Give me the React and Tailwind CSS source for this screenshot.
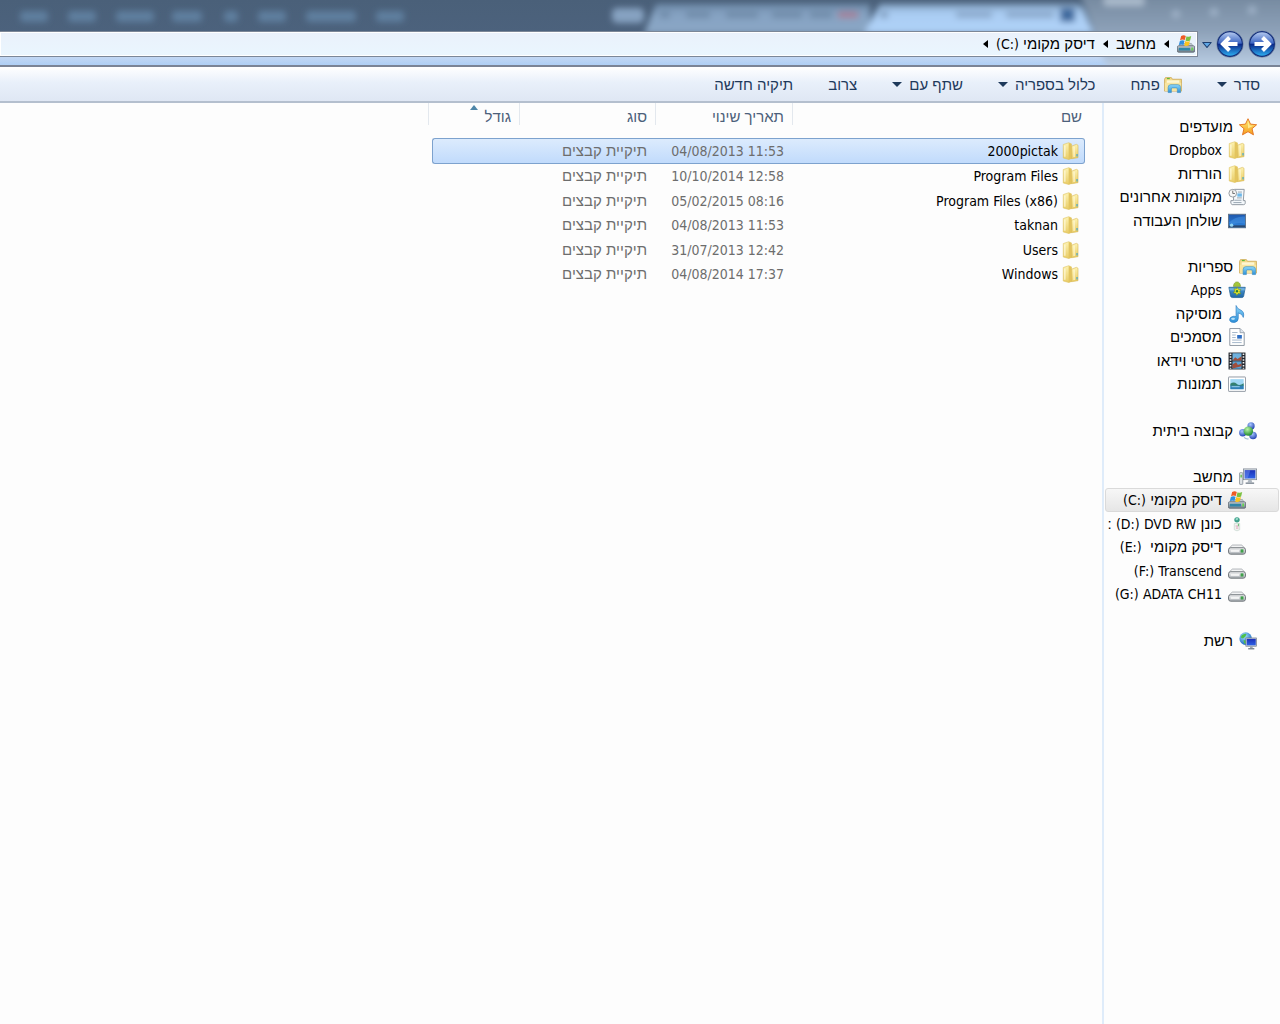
const LATIN = "font-['DejaVu_Sans_Condensed','Noto_Sans',sans-serif] text-[14px]";

const ICONS = {
  star: (
    <>
      <path d="M10 .8l2.8 6 6.8.7-5.1 4.4 1.6 6.8L10 15.2l-6.1 3.5 1.6-6.8L.4 7.5l6.8-.7z" fill="url(#star)" stroke="#e2711d" strokeWidth="1" strokeLinejoin="round" />
      <path d="M10 4l1.8 4.2 4 .4-5.8 3z" fill="#fff3a0" opacity=".8" />
    </>
  ),
  folder: (
    <>
      <path d="M1.4 2.8L7.4.8l3 1.2v16.4l-3 1-6-1.6z" fill="url(#folder)" stroke="#dcbf5c" strokeWidth=".6" />
      <path d="M7.4.8l3.2 1.8v15.8l-3.2 1z" fill="#e3c45e" />
      <path d="M10.6 4.6L16 2.6l1.8 1v13.8l-7.2 1.2z" fill="url(#folder)" stroke="#d6b54e" strokeWidth=".6" />
      <path d="M3.2 4v12.4M13.4 5v11.6" stroke="#fffbe0" strokeWidth="1.2" />
      <path d="M16 13.4h1.4v2.6H16z" fill="#4aa7c9" />
    </>
  ),
  recent: (
    <>
      <path d="M7 1.5h11l-1 12.5h2q.8 4.5-1.6 4.5H4.6Q2.4 18 3.2 14H6z" fill="#f4f8fb" stroke="#878f98" />
      <path d="M11 4.5h4.5M10 11h5.4M7 13.6h8M6 16.2h9" stroke="#9aa6b2" strokeWidth="1.1" />
      <rect x="10.4" y="6" width="5" height="3.6" fill="#6fb8e8" />
      <circle cx="5.3" cy="5.8" r="4.3" fill="#f6f6f6" stroke="#8d949b" />
      <path d="M5.3 3v3.1h2.4" fill="none" stroke="#555" strokeWidth=".9" />
    </>
  ),
  desktop: (
    <>
      <rect x=".5" y="2.5" width="19" height="15" fill="url(#screen)" stroke="#5e7186" />
      <path d="M1 12Q9 4 19 5v8q-9-2-14 1z" fill="#4b9bea" opacity=".45" />
      <path d="M1 14.8h18v2.2H1z" fill="#2a4a72" />
      <circle cx="4" cy="14.6" r="1.9" fill="#8fd3f4" />
    </>
  ),
  library: (
    <>
      <path d="M.6 3.6l1-1.8h6.6l1.2 1.8h10v13.2H.6z" fill="#f2d98a" stroke="#c9a14a" strokeWidth=".8" />
      <path d="M3 4.8h14v3H3z" fill="#fdf6d4" />
      <path d="M3.2 2.8h3.2" stroke="#5fba3c" strokeWidth="1.3" />
      <path d="M1 7.5h18v9.2H1z" fill="#f8e5a1" />
      <path d="M4.6 18.4v-5.6q0-3.2 3-3.2h7.8q3 0 3 3.2v5.6h-3.6v-3.9q0-1.3-1.2-1.3h-4.2q-1.2 0-1.2 1.3v3.9z" fill="url(#cyan)" stroke="#3d8fc0" strokeWidth=".7" />
    </>
  ),
  apps: (
    <>
      <path d="M6 6Q6.600 1 10 1t4 5z" fill="#a4c639" stroke="#6e9021" strokeWidth=".6" />
      <path d="M1 7h18.200l-1.800 9.800q-.3 1.600-2 1.600H5q-1.800 0-2.200-1.600z" fill="url(#bag)" stroke="#1f5d91" strokeWidth=".8" />
      <path d="M1.600 8h17v2.400h-17z" fill="#7ab8e6" opacity=".8" />
      <path d="M10 7l1.600 2.200 2.700.2-1.300 2.300 1.100 2.600-2.700-.5-1.600 2.200-1.300-2.500-2.600-.4 1.700-2-1-2.500 2.600.3z" fill="#e6e62c" stroke="#5c8a1c" strokeWidth=".6" />
      <circle cx="10" cy="11.400" r="1.300" fill="#2a7b34" />
    </>
  ),
  music: (
    <>
      <path d="M9 .6q1 3.8 5.4 5.200 4.200 2 2.600 8-.9-4.200-5.600-5v6q0 4-4.200 4.600-4.800.4-5.400-2.600-.2-3.600 4-4.200 1.800-.2 3.200.4z" fill="url(#cyan)" stroke="#2c7fc4" strokeWidth=".8" />
      <ellipse cx="5.600" cy="15.400" rx="2.200" ry="1.200" fill="#d3f0ff" opacity=".8" />
    </>
  ),
  doc: (
    <>
      <path d="M2 .6h11.400l4.600 4.600v14.200H2z" fill="#fff" stroke="#86909c" />
      <path d="M13.400.6v4.600H18" fill="#dde5ee" stroke="#86909c" strokeWidth=".8" />
      <path d="M4.600 5h6M4.600 7.800h4M4.600 10.600h4M4.600 13.400h10.600M4.600 16.200h10.600" stroke="#9db1c6" strokeWidth="1" />
      <rect x="10.200" y="7.800" width="5.200" height="4" fill="#2f6fc4" />
    </>
  ),
  video: (
    <>
      <rect x=".6" y=".6" width="18.800" height="18.800" fill="#23272e" />
      <rect x="5" y="1.400" width="10" height="8" fill="#6fb1dd" />
      <rect x="5" y="10.400" width="10" height="8.200" fill="#5aa2d3" />
      <path d="M5 9.400l3-3.600 2.600 2L15 4.600v4.800zM5 18.200V14l4-2.600 2 3 4-1.600v3z" fill="#a04e3c" />
      <path d="M2.800 1.600v17M17.200 1.600v17" stroke="#f4f4f4" strokeWidth="1.800" strokeDasharray="1.7 1.5" />
    </>
  ),
  pictures: (
    <>
      <rect x=".5" y="2.200" width="19" height="16" rx=".6" fill="#fff" stroke="#8a929c" />
      <rect x="2.600" y="4.600" width="14.800" height="11.200" fill="#9fd7f5" />
      <path d="M2.600 9.600q4-2.800 7 .2t7.800-.6v3H2.600z" fill="#33806f" />
      <path d="M2.600 11.800h14.800v4H2.600z" fill="#2f80b8" />
      <path d="M4 13h9" stroke="#a5d8ee" />
    </>
  ),
  homegroup: (
    <>
      <circle cx="13.400" cy="4.400" r="4" fill="url(#blueBall)" />
      <circle cx="4.200" cy="12" r="4.100" fill="url(#blueBall)" />
      <circle cx="15.600" cy="15" r="4.200" fill="url(#blueBall)" />
      <circle cx="10.400" cy="10.200" r="5.200" fill="url(#greenBall)" />
      <path d="M5.600 17q2.500 2.400 5 1.600" stroke="#9db9d3" strokeWidth="1.200" fill="none" />
    </>
  ),
  computer: (
    <>
      <rect x="5" y="1" width="14.600" height="12" fill="#d7dde4" stroke="#79838e" strokeWidth=".8" />
      <rect x="6.400" y="2.400" width="11.800" height="9.200" fill="url(#deepScreen)" />
      <path d="M6.400 2.400h6.200l-3 9.200H6.400z" fill="#6f8df0" opacity=".5" />
      <path d="M10.600 13h3.200l1 3H9.400z" fill="#aeb7c0" />
      <path d="M7.400 16h9.400v1.800H7.400z" fill="#8c959f" />
      <rect x=".6" y="5.200" width="3.600" height="13" rx=".6" fill="#dfe4e8" stroke="#7b858f" strokeWidth=".8" />
      <path d="M1.600 7.400h1.600v3.200H1.600z" fill="#5fbf4a" />
    </>
  ),
  winDrive: (
    <>
      <path d="M2.200 12.200L4 9.400h12l1.800 2.800z" fill="#c3cbd2" stroke="#7d8790" strokeWidth=".6" />
      <rect x=".5" y="12" width="19" height="7.200" rx="1.200" fill="url(#darkDrive)" stroke="#55606b" strokeWidth=".8" />
      <path d="M2 14.200h12.400v3H2z" fill="#2f86a8" />
      <path d="M16 14h1.800v3.200H16z" fill="#62d84c" />
      <path d="M4.600 1.200q2.600-1.600 5.200-.2L8.600 5.600Q6 4.200 3.400 5.800z" fill="#ee5a24" />
      <path d="M10.600 1.400q2.600 1.200 5.200-.2l-1.200 4.800Q12 7.400 9.400 6z" fill="#7cc142" />
      <path d="M3.200 6.600q2.600-1.400 5.200-.2l-1.200 4.600q-2.600-1.200-5.200.2z" fill="#2f8fe0" />
      <path d="M9.200 6.800q2.600 1.200 5.200-.2l-1.200 4.800q-2.600 1.400-5.200.2z" fill="#fbc31d" />
    </>
  ),
  dvd: (
    <>
      <circle cx="10" cy="5.400" r="3" fill="#3f9f8a" />
      <path d="M8 4.400q2-2 3.600-.6L10 6z" fill="#9fe0cf" />
      <path d="M7 9.400h6v7q-3 2.400-6 0z" fill="#eef4f0" stroke="#c2d2ca" strokeWidth=".7" />
      <path d="M8.400 12.200l3 .2M9 14.600l2.600-.2" stroke="#e3a6bf" strokeWidth="1.200" />
      <path d="M11.600 9.600v3" stroke="#74c27c" strokeWidth="1.200" />
    </>
  ),
  drive: (
    <>
      <path d="M1.200 11.800L4 8.400q.5-.6 1.400-.6h9.200q.9 0 1.400.6l2.800 3.400z" fill="#f2f3f4" stroke="#979ca1" strokeWidth=".8" />
      <rect x=".6" y="10.800" width="18.800" height="7.200" rx="2.400" fill="url(#drive)" stroke="#666c72" strokeWidth="1" />
      <path d="M3 14.400h9.400" stroke="#fafafa" strokeWidth="1.800" />
      <rect x="14" y="12.600" width="3.200" height="3.600" fill="#3fa04a" />
    </>
  ),
  network: (
    <>
      <circle cx="7.400" cy="7.400" r="7" fill="url(#globe)" />
      <path d="M3 3.600q3-2.400 5.400-1.400L7 5.400 4.400 7.200 2 6zM5 9l3.600.6-.6 3.800-2.200-.6z" fill="#4cc04a" />
      <rect x="7.600" y="6.600" width="12" height="9.200" fill="#cbd3db" stroke="#6c7782" strokeWidth=".7" />
      <rect x="8.600" y="7.600" width="10" height="7.200" fill="url(#deepScreen)" />
      <path d="M12.200 15.800h3v2h-3z" fill="#9ea8b1" />
      <path d="M10.200 17.800H17v1.600h-6.800z" fill="#7e8993" />
    </>
  ),
};

const GROUPS = [
  {
    icon: "star", label: "מועדפים",
    items: [
      { icon: "folder", latin: "Dropbox" },
      { icon: "folder", label: "הורדות" },
      { icon: "recent", label: "מקומות אחרונים" },
      { icon: "desktop", label: "שולחן העבודה" },
    ],
  },
  {
    icon: "library", label: "ספריות",
    items: [
      { icon: "apps", latin: "Apps" },
      { icon: "music", label: "מוסיקה" },
      { icon: "doc", label: "מסמכים" },
      { icon: "video", label: "סרטי וידאו" },
      { icon: "pictures", label: "תמונות" },
    ],
  },
  { icon: "homegroup", label: "קבוצה ביתית", items: [] },
  {
    icon: "computer", label: "מחשב",
    items: [
      { icon: "winDrive", label: "דיסק מקומי", drive: "(C:)", active: true },
      { icon: "dvd", label: "כונן", latin: "DVD RW", drive: "(D:)", tail: ":" },
      { icon: "drive", label: "דיסק מקומי ", drive: "(E:)" },
      { icon: "drive", latin: "Transcend", drive: "(F:)" },
      { icon: "drive", latin: "ADATA CH11", drive: "(G:)" },
    ],
  },
  { icon: "network", label: "רשת", items: [] },
];

const FILES = [
  { name: "2000pictak", date: "04/08/2013 11:53", selected: true },
  { name: "Program Files", date: "10/10/2014 12:58" },
  { name: "Program Files (x86)", date: "05/02/2015 08:16" },
  { name: "taknan", date: "04/08/2013 11:53" },
  { name: "Users", date: "31/07/2013 12:42" },
  { name: "Windows", date: "04/08/2014 17:37" },
];

function Gradients() {
  const list = [
    ["star", "#fff07a", "#f59a1b"],
    ["folder", "#fdf2b0", "#e9cc66"],
    ["screen", "#1d57ad", "#2f86dd"],
    ["cyan", "#8fd8fb", "#2c8fd8"],
    ["bag", "#4f9ad4", "#1f66a6"],
    ["deepScreen", "#1a2fb8", "#2f62e6"],
    ["drive", "#f3f4f5", "#a9aeb3"],
    ["darkDrive", "#c9d0d6", "#717c86"],
  ];
  const balls = [
    ["blueBall", "#a9c8ff", "#2546b4"],
    ["greenBall", "#b8f5a8", "#1f8a2c"],
    ["globe", "#a6e3ff", "#1a66c0"],
  ];
  return (
    <svg className="absolute size-0" aria-hidden="true">
      <defs>
        {list.map(([id, from, to]) => (
          <linearGradient key={id} id={id} x1="0" y1="0" x2="0" y2="1">
            <stop offset="0" stopColor={from} />
            <stop offset="1" stopColor={to} />
          </linearGradient>
        ))}
        {balls.map(([id, from, to]) => (
          <radialGradient key={id} id={id} cx=".4" cy=".3" r=".7">
            <stop offset="0" stopColor={from} />
            <stop offset="1" stopColor={to} />
          </radialGradient>
        ))}
        <linearGradient id="navBall" x1="0" y1="0" x2="0" y2="1">
          <stop offset="0" stopColor="#b9cdf0" />
          <stop offset=".46" stopColor="#3f68c4" />
          <stop offset=".52" stopColor="#0b2a8c" />
          <stop offset="1" stopColor="#2fb4f5" />
        </linearGradient>
      </defs>
    </svg>
  );
}

function Icon({ name }) {
  return (
    <svg viewBox="0 0 20 20" className="size-[18px] shrink-0" aria-hidden="true">
      {ICONS[name]}
    </svg>
  );
}

function Caret() {
  return <span className="border-x-[5px] border-t-[5px] border-x-transparent border-t-[#1e395b]" />;
}

function CrumbArrow() {
  return <span className="border-y-[4px] border-r-[5px] border-y-transparent border-r-black" />;
}

function NavButton({ label, back }) {
  return (
    <button aria-label={label} className="size-[28px] shrink-0">
      <svg viewBox="0 0 28 28" className="size-[28px]">
        <circle cx="14" cy="14" r="13.4" fill="#d9e6f5" stroke="#6b7f9c" strokeWidth=".8" />
        <circle cx="14" cy="14" r="12.4" fill="url(#navBall)" stroke="#14307a" strokeWidth="1.2" />
        <path
          d={back ? "M13.5 7.500L7 14l6.500 6.500M8.500 14h13" : "M14.500 7.500L21 14l-6.500 6.500M19.500 14h-13"}
          fill="none" stroke="#fff" strokeWidth="4"
        />
      </svg>
    </button>
  );
}

// browser window seen through the glass frame
function Glass() {
  const words = [[20, 28], [68, 28], [116, 38], [172, 30], [224, 14], [258, 28], [306, 50], [376, 28]];
  const tabWords = [[660, 10], [686, 24], [726, 32], [772, 30], [810, 22]];
  return (
    <svg className="absolute top-0 right-0 h-[67px] w-[1280px]" viewBox="0 0 1280 67" aria-hidden="true">
      <defs>
        <filter id="soft" x="-10%" y="-50%" width="120%" height="200%">
          <feGaussianBlur stdDeviation="3" />
        </filter>
        <linearGradient id="tab" x1="0" y1="0" x2="0" y2="1">
          <stop offset="0" stopColor="#6c88a6" />
          <stop offset=".35" stopColor="#86a3c3" />
          <stop offset="1" stopColor="#8ba7c5" />
        </linearGradient>
        <linearGradient id="tabOn" x1="0" y1="0" x2="0" y2="1">
          <stop offset="0" stopColor="#7f9dbd" />
          <stop offset=".3" stopColor="#aacdf3" />
          <stop offset="1" stopColor="#b0d2f8" />
        </linearGradient>
        <linearGradient id="frameEnd" x1="0" y1="0" x2="0" y2="1">
          <stop offset="0" stopColor="#74889e" />
          <stop offset=".45" stopColor="#8da1b8" />
          <stop offset="1" stopColor="#c6d9f0" />
        </linearGradient>
      </defs>
      <g filter="url(#soft)">
        <path d="M1080-6H1290V76H1110z" fill="url(#frameEnd)" />
        <path d="M1104-4h40v10h-40z" fill="#a9b9ca" />
        <circle cx="1176" cy="14" r="4" fill="#9fb2c8" />
        <circle cx="1214" cy="12" r="4" fill="#9fb2c8" />
        <circle cx="1252" cy="10" r="4" fill="#9fb2c8" />
        <path d="M644 34L656 4h214v30z" fill="url(#tab)" />
        <path d="M864 34L880 4h196q6 0 8 8l10 22z" fill="url(#tabOn)" />
        <rect x="612" y="8" width="32" height="15" rx="5" fill="#86a2c1" />
        {words.map(([x, w]) => <rect key={x} x={x} y="11" width={w} height="11" rx="4" fill="#5f7f9f" />)}
        {tabWords.map(([x, w]) => <rect key={x} x={x} y="12" width={w} height="6" fill="#708ba9" />)}
        <rect x="838" y="12" width="20" height="6" fill="#a67f96" />
        <rect x="880" y="12" width="8" height="6" fill="#7f9cbd" />
        <rect x="956" y="12" width="36" height="6" fill="#8aa8cb" />
        <rect x="1006" y="12" width="48" height="6" fill="#8aa8cb" />
        <rect x="1060" y="8" width="15" height="14" rx="2" fill="#3f6a9f" />
      </g>
    </svg>
  );
}

function AddressBar() {
  return (
    <header className="relative bg-linear-to-b from-[#4a6079] via-[#4c627d] to-[#8397b0] pt-[30px]">
      <div className="absolute inset-x-0 bottom-0 h-[11px] bg-linear-to-b from-[#c5d8f3] to-[#a9cdf6]" />
      <Glass />
      <div className="relative flex h-[37px] items-start border-b-2 border-b-[#7a8496] pr-[4px]">
        <div className="flex gap-[4px]">
          <NavButton label="קדימה" />
          <NavButton label="אחורה" back />
        </div>
        <button aria-label="מיקומים אחרונים" className="mx-[4px] flex h-[30px] w-[10px] items-center justify-center">
          <svg viewBox="0 0 12 8" className="h-[8px] w-[10px]">
            <path d="M1 1h10L6 7z" fill="#5fa8e6" stroke="#1d3f70" strokeWidth="1.4" strokeLinejoin="round" />
          </svg>
        </button>
        <nav className="mt-px flex h-[26px] flex-1 items-center gap-[8px] border border-l-0 border-[#7c8797] bg-linear-to-b from-[#eaf1fb] to-[#eaf6fe] pr-[2px] text-[15px] shadow-[inset_0_0_0_1px_#fff]">
          <Icon name="winDrive" />
          <CrumbArrow />
          <button>מחשב</button>
          <CrumbArrow />
          <button>דיסק מקומי <bdi dir="ltr" className={LATIN}>(C:)</bdi></button>
          <CrumbArrow />
        </nav>
      </div>
    </header>
  );
}

function Toolbar() {
  return (
    <div className="flex h-[36px] items-center gap-[35px] border-b-2 border-b-[#b4bfce] bg-linear-to-b from-white via-[#e9f0fa] via-45% to-[#dfe7f4] pt-px pr-[20px] text-[15px] text-[#1e395b]">
      <button className="flex items-center gap-[7px]">סדר <Caret /></button>
      <button className="flex items-center gap-[4px]"><Icon name="library" /> פתח</button>
      <button className="flex items-center gap-[7px]">כלול בספריה <Caret /></button>
      <button className="flex items-center gap-[7px]">שתף עם <Caret /></button>
      <button>צרוב</button>
      <button>תיקיה חדשה</button>
    </div>
  );
}

function TreeLink({ item, head }) {
  return (
    <li className="h-[23px] even:h-[24px]">
      <a
        href="#"
        className={`mx-px flex h-full items-center gap-[6px] overflow-hidden border whitespace-pre ${head ? "pr-[21px]" : "pr-[32px]"} ${
          item.active ? "rounded-[3px] border-[#dadada] bg-linear-to-b from-[#f7f7f7] to-[#e6e6e6]" : "border-transparent"
        }`}
      >
        <Icon name={item.icon} />
        <span>
          {item.label}
          {item.label && item.latin && " "}
          {item.latin && <bdi dir="ltr" className={LATIN}>{item.latin}</bdi>}
          {item.drive && <> <bdi dir="ltr" className={LATIN}>{item.drive}</bdi></>}
          {item.tail && ` ${item.tail}`}
        </span>
      </a>
    </li>
  );
}

function Sidebar() {
  return (
    <nav className="flex w-[178px] shrink-0 flex-col gap-[23px] border-l-2 border-l-[#dfecfa] pt-[12px] text-[15px] text-black">
      {GROUPS.map(g => (
        <ul key={g.label}>
          <TreeLink item={g} head />
          {g.items.map((item, i) => <TreeLink key={i} item={item} />)}
        </ul>
      ))}
    </nav>
  );
}

function HeadCell({ children, span, sorted, first }) {
  return (
    <th colSpan={span} className="h-[35px] p-0 align-top font-normal">
      <div className={`relative flex h-[22px] items-end border-l border-l-[#e3e8ee] leading-[16px] ${first ? "pr-[3px]" : "pr-[8px]"}`}>
        {children}
        {sorted && (
          <svg viewBox="0 0 8 5" className="absolute top-[2px] left-1/2 h-[5px] w-[8px] -translate-x-1/2" aria-hidden="true">
            <path d="M0 5L4 0l4 5z" fill="#4f86a8" />
          </svg>
        )}
      </div>
    </th>
  );
}

function FileTable() {
  return (
    <table className="w-[657px] table-fixed border-separate border-spacing-0 text-right text-[15px] text-[#6d6d6d]">
      <colgroup>
        <col className="w-[293px]" />
        <col className="w-[137px]" />
        <col className="w-[136px]" />
        <col className="w-[87px]" />
        <col className="w-[4px]" />
      </colgroup>
      <thead className="text-[#4c607a]">
        <tr>
          <HeadCell first>שם</HeadCell>
          <HeadCell>תאריך שינוי</HeadCell>
          <HeadCell>סוג</HeadCell>
          <HeadCell span={2} sorted>גודל</HeadCell>
        </tr>
      </thead>
      <tbody>
        {FILES.map(f => {
          const cell = f.selected ? "border-y border-[#7da2ce] bg-linear-to-b from-[#dcebfd] to-[#c1dbfc]" : "";
          return (
            <tr key={f.name} className={f.selected ? "h-[26px]" : "h-[25px] even:h-[24px]"}>
              <td className={`p-0 ${cell} ${f.selected ? "rounded-r-[3px] border-r" : ""}`}>
                <div className={`flex items-center gap-[4px] text-black ${f.selected ? "pr-[4px]" : "pr-[5px]"}`}>
                  <Icon name="folder" />
                  <bdi dir="ltr" className={LATIN}>{f.name}</bdi>
                </div>
              </td>
              <td className={`p-0 pr-[8px] ${cell}`}><bdi dir="ltr" className={LATIN}>{f.date}</bdi></td>
              <td className={`p-0 pr-[8px] ${cell}`}>תיקיית קבצים</td>
              <td className={`p-0 ${cell} ${f.selected ? "rounded-l-[3px] border-l" : ""}`} />
            </tr>
          );
        })}
      </tbody>
    </table>
  );
}

function App() {
  return (
    <div dir="rtl" className="flex min-h-screen flex-col overflow-hidden bg-[#fdfdfd] font-['Liberation_Sans',sans-serif] leading-[20px] text-black">
      <Gradients />
      <AddressBar />
      <Toolbar />
      <div className="flex flex-1">
        <Sidebar />
        <main className="flex-1 pr-[17px]">
          <FileTable />
        </main>
      </div>
    </div>
  );
}

export default App;
